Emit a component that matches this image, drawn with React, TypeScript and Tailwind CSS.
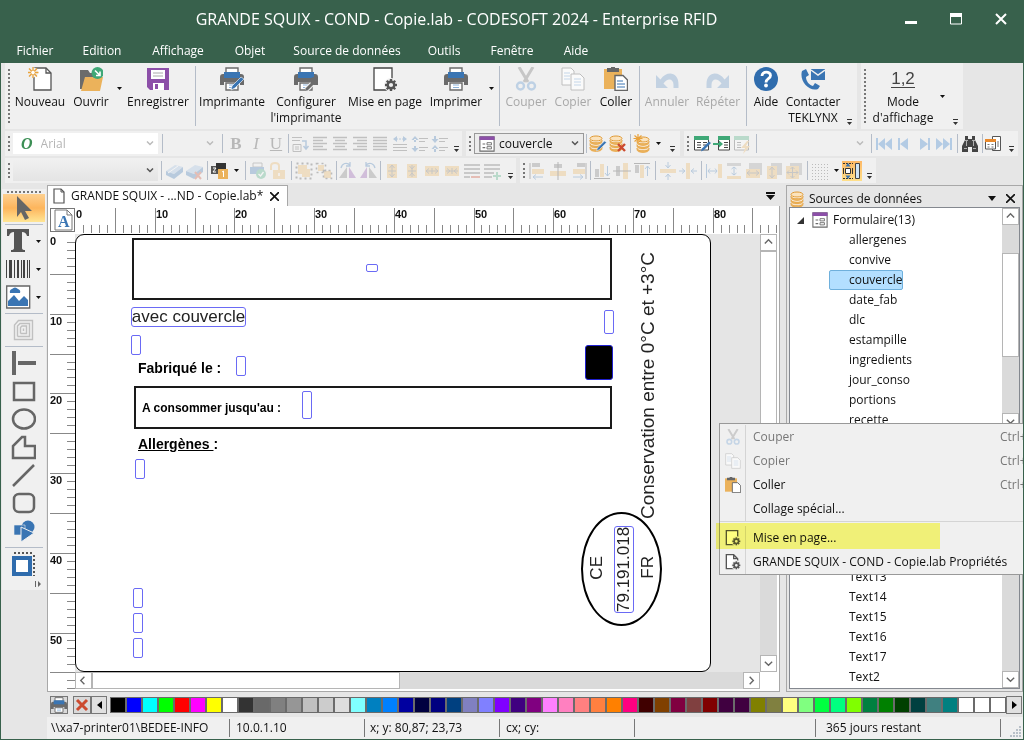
import React from 'react';
import clsx from 'clsx';

const GREY = '#6b6b6b';
const BLUE = '#3a75b3';
const ORANGE = '#ebb25b';
const PURPLE = '#8c4fa8';
const GREEN = '#3fa877';
const RED = '#cc4a2f';

type IconProps = { size?: number; box?: number; children: React.ReactNode };

const Icon: React.FC<IconProps> = ({ size = 20, box = size, children }) => (
  <svg width={size} height={size} viewBox={`0 0 ${box} ${box}`} fill="none" className="block shrink-0">
    {children}
  </svg>
);

/* ---------- shared glyph parts ---------- */

const Printer = () => (
  <>
    <path d="M6 1h12v5H6z" fill="#fff" stroke={GREY} strokeWidth="1.4" />
    <path d="M0 10q0-3 3-3h18q3 0 3 3v8h-4v-3H4v3H0z" fill={GREY} />
    <path d="M4 5h16v6H4z" fill={BLUE} />
    <path d="M6 16h12v7H6z" fill="#fff" stroke={GREY} strokeWidth="1.4" />
    <path d="M9 18h6M9 20.500h6" stroke="#8db3da" />
  </>
);

const Pencil = () => <path d="M24 12l-9 9-4 2 1-4 9-9z" fill={BLUE} stroke="#fff" strokeWidth="0.6" />;

const Gear = ({ x, y, r }: { x: number; y: number; r: number }) => (
  <g transform={`translate(${x} ${y})`}>
    {[0, 45, 90, 135].map((a) => (
      <path key={a} d={`M0 ${-r}V${r}`} stroke="#555" strokeWidth={r * 0.4} transform={`rotate(${a})`} />
    ))}
    <circle r={r * 0.55} fill="#f0f0f0" stroke="#555" strokeWidth={r * 0.4} />
  </g>
);

const Cylinder = () => (
  <>
    <path d="M2 4v11c0 2 2.500 3 6 3s6-1 6-3V4z" fill="#fff" />
    {[15, 11.5, 8].map((y) => (
      <path key={y} d={`M2 ${y - 2}v1.500c0 2 2.500 3 6 3s6-1 6-3v-1.500c0 1.500-2.500 2.500-6 2.500s-6-1-6-2.500z`} fill={ORANGE} stroke="#e09a35" strokeWidth="0.6" />
    ))}
    <ellipse cx="8" cy="4.500" rx="6" ry="2.500" fill="#fbe3bd" stroke="#e09a35" />
  </>
);

const FormGlyph = () => (
  <>
    <path d="M1 1h16v16H1z" fill="#fff" stroke={GREY} strokeWidth="1.2" />
    <path d="M.5.5h17v4H.5z" fill={PURPLE} />
    <path d="M4 9h3M4 13h3" stroke={GREY} strokeWidth="1.300" />
    <path d="M9 7.500h5v2.500H9zM9 12h5v2.500H9z" stroke={GREY} />
  </>
);

const Scissors = () => (
  <>
    <path d="M5 0l9 15M19 0l-9 15" stroke="#b5b5b5" strokeWidth="3" />
    <circle cx="6.500" cy="19" r="3.500" stroke="#a9c4e0" strokeWidth="2.400" />
    <circle cx="17.500" cy="19" r="3.500" stroke="#a9c4e0" strokeWidth="2.400" />
  </>
);

const Pages = () => (
  <>
    <path d="M1 1h9l3 3v14H1z" fill="#fff" stroke="#aaa" />
    <path d="M3 6h6M3 9h6M3 12h6" stroke="#b2cce6" />
    <path d="M10 7h9l4 4v12H10z" fill="#fff" stroke="#aaa" />
    <path d="M13 12h7M13 15h7M13 18h7" stroke="#b2cce6" />
  </>
);

const Paste = () => (
  <>
    <path d="M0 2h18v20H0z" fill={ORANGE} />
    <path d="M3 1h12v4H3zM7 0h4v2H7z" fill="#666" />
    <path d="M11 8.500h8l4.500 4.500v10.500H11z" fill="#fff" stroke="#666" strokeWidth="1.400" />
  </>
);

/* ---------- large toolbar icons (24 x 24) ---------- */

const big = {
  nouveau: (
    <>
      <path d="M6 1h12l5 5v17H6z" fill="#fff" stroke="#555" strokeWidth="1.300" />
      <path d="M18 1v5h5" stroke="#555" strokeWidth="1.300" />
      <circle cx="5" cy="5.500" r="5" fill="#f0f0f0" />
      <g stroke="#e9a23b" strokeWidth="1.300">
        <path d="M5 0v11M-.5 5.500h11M1 1.500l8 8M9 1.500l-8 8" />
      </g>
      <circle cx="5" cy="5.500" r="1.800" fill="#fff" />
    </>
  ),
  ouvrir: (
    <>
      <path d="M1 3h8l2 3h9v4H7L4 22H1z" fill={GREY} />
      <path d="M6 10h18l-3 14H2z" fill={ORANGE} />
      <circle cx="18.500" cy="6" r="6" fill={GREEN} />
      <path d="M16 3.500l5 5M21 4.500v4h-4" stroke="#fff" strokeWidth="1.600" />
    </>
  ),
  enregistrer: (
    <>
      <path d="M1 1h22v22H4l-3-3z" fill={PURPLE} />
      <path d="M5 3h14v9H5z" fill="#fff" />
      <path d="M7 6h10M7 9h10" stroke="#aaa" />
      <path d="M7 16h11v7H7z" fill="#fff" />
      <path d="M9 17h3v5H9z" fill={PURPLE} />
    </>
  ),
  imprimante: (
    <>
      <Printer />
      <Pencil />
    </>
  ),
  configurer: (
    <>
      <Printer />
      <path d="M12 23l8-8" stroke="#f0f0f0" strokeWidth="5" />
      <path d="M13 22l7-7" stroke={GREY} strokeWidth="3" strokeLinecap="round" />
      <path d="M24 13a4 4 0 1 1-4-3l-1 3 2 1z" fill={GREY} />
    </>
  ),
  mise: (
    <>
      <path d="M1 1h18v22H1z" fill="#fff" stroke="#444" strokeWidth="1.300" />
      <circle cx="18" cy="18" r="7" fill="#f0f0f0" />
      <Gear x={18} y={18} r={6} />
    </>
  ),
  imprimer: <Printer />,
  couper: <Scissors />,
  copier: <Pages />,
  coller: (
    <>
      <Paste />
      <path d="M13 14h6M13 17h8M13 20h8" stroke={BLUE} />
    </>
  ),
  annuler: <path d="M1 8v13h12l-4.500-4.500c4-6 10-5 10 1.500V21h5v-3C24 5 12 3 5.500 12.500z" fill="#b0c6dd" />,
  repeter: <path d="M23 8v13H11l4.500-4.500c-4-6-10-5-10 1.500V21H.5v-3C0 5 12 3 18.500 12.500z" fill="#b0c6dd" />,
  aide: (
    <>
      <circle cx="12" cy="12" r="12" fill="#2f6cad" />
      <path d="M8 9c0-5 8.500-5 8.500-.5 0 3.500-4.500 3-4.500 7" stroke="#fff" strokeWidth="2.800" />
      <circle cx="12" cy="18.500" r="1.900" fill="#fff" />
    </>
  ),
  contacter: (
    <>
      <path d="M1 4l4-2 3 6-3 2c0 4 3 8 7 9l2-3 5 3-2 3C8 25-2 14 1 4z" fill={BLUE} />
      <path d="M10 2h14v11H10z" fill={BLUE} />
      <path d="M10 3l7 5 7-5" stroke="#f0f0f0" strokeWidth="1.500" />
    </>
  ),
};

/* ---------- small toolbar icons (20 x 20) ---------- */

const lines = (spans: [number, number][]) => (
  <path d={spans.map(([a, b], i) => `M${a} ${3.5 + i * 3}H${b}`).join('')} stroke="#555" strokeWidth="1.300" />
);

const small = {
  props: (
    <>
      <path d="M2 3.500h10M2 6.500h8M3 10.500h8v7H3zM5 13h4M5 15h4" stroke="#555" />
      <path d="M12 7h4v7M13.500 12l2.500 3 2.500-3" stroke={BLUE} strokeWidth="1.500" />
    </>
  ),
  left: lines([[3, 17], [3, 13], [3, 17], [3, 13], [3, 17]]),
  center: lines([[3, 17], [5, 15], [3, 17], [5, 15], [3, 17]]),
  right: lines([[3, 17], [7, 17], [3, 17], [7, 17], [3, 17]]),
  justify: lines([[3, 17], [3, 17], [3, 17], [3, 17], [3, 17]]),
  widen: (
    <>
      <path d="M3 10.500h14M3 13.500h14M3 16.500h14" stroke="#555" />
      <path d="M6 5H14" stroke={BLUE} strokeDasharray="2 1" />
      <path d="M7 2v6L3 5zM13 2v6l4-3z" fill={BLUE} />
    </>
  ),
  spaceDown: (
    <>
      <path d="M9 4.500h9M9 7.500h6M9 13.500h9M9 16.500h6" stroke="#555" />
      <path d="M5 2L1.500 6h7zM5 18l-3.500-4h7zM4 5h2v3H4zM4 12h2v3H4z" fill={BLUE} />
    </>
  ),
  spaceUp: (
    <>
      <path d="M9 4.500h9M9 7.500h6M9 13.500h9M9 16.500h6" stroke="#555" />
      <path d="M5 9L1.500 5h7zM5 11l-3.500 4h7zM4 2h2v3H4zM4 14h2v4H4z" fill={BLUE} />
    </>
  ),
  dbEdit: (
    <>
      <Cylinder />
      <path d="M18.500 8.500l-7 7-3 1.500 1-3 7-7z" fill={BLUE} stroke="#f0f0f0" strokeWidth="0.500" />
    </>
  ),
  dbDelete: (
    <>
      <Cylinder />
      <path d="M10 10l7 7M17 10l-7 7" stroke={RED} strokeWidth="2.400" />
    </>
  ),
  dbNew: (
    <>
      <g transform="translate(3 1)">
        <Cylinder />
      </g>
      <path d="M6 0v9M1.500 4.500h9M2.500 1.500l7 6M9.500 1.500l-7 6" stroke="#e9a23b" strokeWidth="1.200" />
    </>
  ),
  tableEdit: (
    <>
      <path d="M2.500 3h14v13h-14z" fill="#fff" stroke="#444" />
      <path d="M2 2h15v4H2z" fill={GREEN} />
      <path d="M5 8.500h4M5 11h4M5 13.500h4M11 8.500h4M11 11h3" stroke="#444" />
      <path d="M19 9l-7 7-3 1.500 1-3 7-7z" fill={BLUE} />
    </>
  ),
  tableImport: (
    <>
      <path d="M6.500 3h11v13h-11z" fill="#fff" stroke="#444" />
      <path d="M6 2h12v4H6zM1 9h6V6.500L11 10l-4 3.500V11H1z" fill={GREEN} />
      <path d="M12 8.500h4M12 11h4M12 13.500h4" stroke="#444" />
    </>
  ),
  tableFlash: (
    <>
      <path d="M2.500 3h14v13h-14z" fill="#fff" stroke="#444" />
      <path d="M2 2h15v4H2z" fill={GREEN} />
      <path d="M5 8.500h4M5 11h4M5 13.500h4" stroke="#444" />
      <path d="M15 7l-6 7h4l-2 6 7-8h-4l3-5z" fill={ORANGE} />
    </>
  ),
  first: <path d="M2 4h2v12H2zM11 4v12l-7-6zM18 4v12l-7-6z" fill="#a5c3e2" />,
  prev: <path d="M4 4h2v12H4zM14 4v12l-8-6z" fill="#a5c3e2" />,
  next: <path d="M14 4h2v12h-2zM6 4v12l8-6z" fill="#a5c3e2" />,
  last: <path d="M16 4h2v12h-2zM2 4v12l7-6zM9 4v12l7-6z" fill="#a5c3e2" />,
  find: (
    <>
      <path d="M5 2h3v3h4V2h3v4l3 6v6h-6v-5H8v5H2v-6l3-6z" fill="#444" />
      <path d="M5 6.500h3M12 6.500h3M4 14.500h3M13 14.500h3M6.500 7v5M13.500 7v5" stroke="#b0b0b0" />
    </>
  ),
  record: (
    <>
      <path d="M8.500 2.500h8v14h-8z" fill="#fff" stroke="#555" />
      <path d="M1.500 6h10v9h-10z" fill="#fff" stroke="#555" />
      <path d="M1 5h11v3H1z" fill="#e8892c" />
      <path d="M3.500 10.500h2M3.500 13h2M7.500 10.500h2M7.500 13h2M14 7v6" stroke="#777" />
    </>
  ),
  box: (
    <>
      <path d="M2 10l9-6 8 2-9 7z" fill="#9dbde0" />
      <path d="M2 10l8 3v5l-8-4zM10 13l9-7v5l-9 7z" fill={BLUE} />
      <path d="M4 12l10-7" stroke="#fff" />
    </>
  ),
  boxDelete: (
    <>
      <path d="M2 10l9-6 8 2-9 7z" fill="#9dbde0" />
      <path d="M2 10l8 3v5l-8-4zM10 13l9-7v5l-9 7z" fill={BLUE} />
      <path d="M11 11l6 7M17 11l-6 7" stroke={RED} strokeWidth="2" />
    </>
  ),
  layers: (
    <>
      <path d="M1 5h9v8H1z" fill="#555" />
      <path d="M6 2h10v7H6z" fill="#333" />
      <path d="M8 8h10v10H8z" fill={ORANGE} />
      <path d="M3 7h3l-3 4h3" stroke="#fff" />
      <path d="M12 11l1.500-1v6" stroke="#fff" />
    </>
  ),
  printCheck: (
    <>
      <path d="M5 2h9v4H5z" stroke={GREY} />
      <path d="M2 6h14v7H2z" fill={BLUE} />
      <circle cx="13" cy="13" r="5" fill={GREEN} />
      <path d="M10.500 13l2 2 3-4" stroke="#fff" strokeWidth="1.300" />
    </>
  ),
  unlock: (
    <>
      <path d="M3 9V5c0-4 8-4 8 0v4" stroke={ORANGE} strokeWidth="2" />
      <path d="M5 9h12v9H5z" fill={ORANGE} />
      <path d="M11 12v3" stroke="#fff" strokeWidth="1.500" />
    </>
  ),
  group: (
    <>
      <path d="M4 4h9v9H4zM8 8h8v8H8z" fill={ORANGE} />
      <path d="M2.500 2.500h15v15h-15z" stroke="#444" strokeWidth="2" strokeDasharray="2 3" />
    </>
  ),
  ungroup: (
    <>
      <path d="M4 4h6v6H4zM10 10h7v7h-7z" fill={ORANGE} />
      <path d="M2.500 2.500h9v9h-9zM9.500 9.500h8v8h-8z" stroke="#444" strokeWidth="1.600" strokeDasharray="2 3" />
    </>
  ),
  rotateLeft: (
    <>
      <path d="M9 6v11H1z" fill="#777" />
      <path d="M11 6v11h7z" fill={PURPLE} />
      <path d="M3 7c1-5 6-6 9-3M12 1v4H8" stroke={BLUE} strokeWidth="1.300" />
    </>
  ),
  rotateRight: (
    <>
      <path d="M9 6v11H2z" fill={PURPLE} />
      <path d="M11 6v11h8z" fill="#777" />
      <path d="M17 7c-1-5-6-6-9-3M8 1v4h4" stroke={BLUE} strokeWidth="1.300" />
    </>
  ),
  growV: (
    <>
      <path d="M5 3h10v14H5z" fill={ORANGE} />
      <path d="M10 4v12M7.500 7L10 4l2.500 3M7.500 13l2.500 3 2.500-3M6 10h8" stroke={GREY} />
    </>
  ),
  shrinkV: (
    <>
      <path d="M5 3h10v14H5z" fill={ORANGE} />
      <path d="M10 4v12M7.500 5l2.500 3 2.500-3M7.500 15l2.500-3 2.500 3M6 10h8" stroke={GREY} />
    </>
  ),
  growH: (
    <>
      <path d="M3 5h14v10H3z" fill={ORANGE} />
      <path d="M4 10h12M7 7.500L4 10l3 2.500M13 7.500l3 2.500-3 2.500M10 7v6" stroke={GREY} />
    </>
  ),
  shrinkH: (
    <>
      <path d="M3 5h14v10H3z" fill={ORANGE} />
      <path d="M4 10h12M5 7.500L8 10l-3 2.500M15 7.500L12 10l3 2.500M10 7v6" stroke={GREY} />
    </>
  ),
  rowRemove: (
    <>
      <path d="M2 4h16M2 8h16M2 12h16M2 16h6" stroke="#444" strokeWidth="1.500" />
      <path d="M9 16h9" stroke={RED} strokeWidth="2" />
    </>
  ),
  rowAdd: (
    <>
      <path d="M2 4h16M2 8h16M2 12h10M2 16h8" stroke="#444" strokeWidth="1.500" />
      <path d="M11 15h8M15 11v8" stroke={GREEN} strokeWidth="2" />
    </>
  ),
  alignL: (
    <>
      <path d="M2 2v16" stroke="#333" />
      <path d="M4 2h8v4H4z" fill="#777" />
      <path d="M4 8h12v5H4z" fill={ORANGE} />
      <path d="M15 16H5M8 13.500L5 16l3 2.500" stroke={BLUE} />
    </>
  ),
  alignC: (
    <>
      <path d="M6 3h8v4H6z" fill="#777" />
      <path d="M2 10h16v5H2z" fill={ORANGE} />
      <path d="M10 1v18" stroke="#333" />
    </>
  ),
  alignR: (
    <>
      <path d="M18 2v16" stroke="#333" />
      <path d="M9 2h8v4H9z" fill="#777" />
      <path d="M5 8h12v5H5z" fill={ORANGE} />
      <path d="M5 16h10M12 13.500l3 2.500-3 2.500" stroke={BLUE} />
    </>
  ),
  alignB: (
    <>
      <path d="M2 17.500h16" stroke="#333" />
      <path d="M3 8h4v8H3z" fill="#777" />
      <path d="M8 3h4v13H8z" fill={ORANGE} />
      <path d="M15.500 5v10M13 12l2.500 3 2.500-3" stroke={BLUE} />
    </>
  ),
  alignM: (
    <>
      <path d="M4 5h4v10H4z" fill="#777" />
      <path d="M11 2h5v16h-5z" fill={ORANGE} />
      <path d="M1 10h18" stroke="#333" />
    </>
  ),
  alignT: (
    <>
      <path d="M2 2.500h16" stroke="#333" />
      <path d="M3 4h4v8H3z" fill="#777" />
      <path d="M8 4h4v13H8z" fill={ORANGE} />
      <path d="M15.500 15V5M13 8l2.500-3L18 8" stroke={BLUE} />
    </>
  ),
  meetV: (
    <>
      <path d="M2 8h16v4H2z" fill={ORANGE} />
      <path d="M10 1v5M7.500 4L10 7l2.500-3M10 19v-5M7.500 16l2.500-3 2.500 3" stroke={BLUE} />
    </>
  ),
  meetH: (
    <>
      <path d="M8 2h4v16H8z" fill={ORANGE} />
      <path d="M1 10h5M4 7.500L7 10l-3 2.500M19 10h-5M16 7.500L13 10l3 2.500" stroke={BLUE} />
    </>
  ),
  spreadH: (
    <>
      <path d="M14 3h4v14h-4z" fill={ORANGE} />
      <path d="M2.500 3v14M4 10h9M6 7.500L4 10l2 2.500M11 7.500l2 2.500-2 2.500" stroke={BLUE} />
    </>
  ),
  spreadV: (
    <>
      <path d="M3 2h14v3H3z" fill="#999" />
      <path d="M3 15h14v3H3z" fill={ORANGE} />
      <path d="M10 6v8M7.500 8L10 6l2.500 2M7.500 12l2.500 2 2.500-2" stroke={BLUE} />
    </>
  ),
  sameW: (
    <>
      <path d="M5 2h13v12H5z" fill="#999" />
      <path d="M2 8h14v9H2z" fill={ORANGE} />
      <path d="M3 12h12M6 9.500L3 12l3 2.500M12 9.500l3 2.500-3 2.500" stroke={GREY} />
    </>
  ),
  sameH: (
    <>
      <path d="M7 2h11v12H7z" fill="#999" />
      <path d="M3 5h10v13H3z" fill={ORANGE} />
      <path d="M8 6v11M5.500 9L8 6l2.500 3M5.500 14L8 17l2.500-3" stroke={GREY} />
    </>
  ),
  sameWH: (
    <>
      <path d="M6 2h12v12H6z" fill="#999" />
      <path d="M2 5h13v13H2z" fill={ORANGE} />
      <path d="M8.500 6v11M3 11.500h11M6.500 8l2-2 2 2M6.500 15l2 2 2-2M5 9.500l-2 2 2 2M12 9.500l2 2-2 2" stroke={GREY} />
    </>
  ),
  grid: <path d="M2 3.500h17M2 6.500h17M2 9.500h17M2 12.500h17M2 15.500h17M2 18.500h17" stroke="#444" strokeDasharray="1 2" />,
  snap: (
    <>
      <path d="M1 2.500h10M1 17.500h10" stroke="#333" strokeDasharray="2 1" />
      <path d="M3.500 7.500h5v5h-5z" fill="#fff" stroke="#333" />
      <path d="M6 2L3.500 5.500h5zM6 18l-2.500-3.500h5z" fill={BLUE} />
      <path d="M1.500 7v6M10.500 7v6" stroke="#333" />
      <path d="M13.500 2.500h4v15h-4z" fill="#cfe5f7" stroke="#444" />
    </>
  ),
};

/* ---------- toolbar building blocks ---------- */

const Bar: React.FC<{ className?: string; children: React.ReactNode }> = ({ className, children }) => (
  <div className={clsx('flex items-center bg-[#f0f0f0]', className)}>{children}</div>
);

const Handle: React.FC<{ tall?: boolean }> = ({ tall }) => (
  <div className="flex w-2 shrink-0 justify-center">
    <div className={clsx('border-l-2 border-dotted border-[#777]', tall ? 'h-[54px]' : 'h-[15px]')} />
  </div>
);

const Sep: React.FC<{ className?: string }> = ({ className = 'w-1' }) => (
  <div className={clsx('flex shrink-0 justify-center self-stretch py-[3px]', className)}>
    <div className="w-px bg-[#b4bcc8]" />
  </div>
);

const Caret: React.FC<{ label: string; className?: string }> = ({ label, className = 'w-3' }) => (
  <button aria-label={label} className={clsx('flex shrink-0 justify-center', className)}>
    <svg width="5" height="3" viewBox="0 0 5 3">
      <path d="M0 0h5L2.500 3z" fill="#111" />
    </svg>
  </button>
);

const More: React.FC<{ className?: string }> = ({ className }) => (
  <button aria-label="Options de barre d'outils" className={clsx('flex shrink-0 items-end justify-center self-stretch pb-1', className)}>
    <svg width="5" height="6" viewBox="0 0 5 6">
      <path d="M0 0h5v1H0zM0 3h5L2.500 6z" fill="#333" />
    </svg>
  </button>
);

const BigTool: React.FC<{ icon: React.ReactNode; label: string; second?: string; width: string; off?: boolean }> = ({ icon, label, second, width, off }) => (
  <button disabled={off} className={clsx('flex shrink-0 flex-col items-center self-stretch pt-1 whitespace-nowrap', width, off && 'text-[#a8a8a8]')}>
    <span className={clsx(off && 'opacity-70')}>
      <Icon size={24}>{icon}</Icon>
    </span>
    <span className="mt-[3px] leading-4">{label}</span>
    {second && <span className="leading-4">{second}</span>}
  </button>
);

const Tool: React.FC<{ name: keyof typeof small; off?: boolean; active?: boolean }> = ({ name, off = true, active }) => (
  <button
    aria-label={name}
    disabled={off}
    className={clsx('shrink-0', off && 'opacity-30', active && 'bg-linear-to-b from-[#fdb866] to-[#ffe08a]')}
  >
    <Icon size={20}>{small[name]}</Icon>
  </button>
);

const Combo: React.FC<{ label: string; value: string; className?: string; dim?: boolean; icon?: React.ReactNode; field?: string }> = ({ label, value, className, dim, icon, field }) => (
  <label className={clsx('flex h-[21px] shrink-0 items-center pr-1 pl-1', className)}>
    {icon}
    <select aria-label={label} disabled={dim} className={clsx('min-w-0 flex-1 appearance-none bg-transparent outline-none', field)}>
      <option>{value}</option>
    </select>
    <svg width="8" height="5" viewBox="0 0 8 5" fill="none">
      <path d="M1 .5l3 3 3-3" stroke={dim ? '#bbb' : '#555'} strokeWidth="1.500" />
    </svg>
  </label>
);

const menus = [
  ['Fichier', 'w-[68px]'],
  ['Edition', 'w-[66px]'],
  ['Affichage', 'w-[86px]'],
  ['Objet', 'w-[58px]'],
  ['Source de données', 'w-[136px]'],
  ['Outils', 'w-[58px]'],
  ['Fenêtre', 'w-[78px]'],
  ['Aide', 'w-[50px]'],
];

const TitleBar = () => (
  <header className="bg-[#38614c] text-white">
    <div className="flex h-[38px] items-center">
      <h1 className="flex-1 pl-6 text-center text-[16px]">GRANDE SQUIX - COND - Copie.lab - CODESOFT 2024 - Enterprise RFID</h1>
      <button aria-label="Réduire" className="flex w-[45px] justify-center">
        <Icon size={12}><path d="M0 8h12v3H0z" fill="#fff" /></Icon>
      </button>
      <button aria-label="Agrandir" className="flex w-[45px] justify-center">
        <Icon size={12}><path d="M.5 1h11v10H.5z" stroke="#fff" /><path d="M0 0h12v4H0z" fill="#fff" /></Icon>
      </button>
      <button aria-label="Fermer" className="flex w-[45px] justify-center">
        <Icon size={12}><path d="M1 1l10 10M11 1L1 11" stroke="#fff" strokeWidth="2" /></Icon>
      </button>
    </div>
    <nav className="flex h-[25px] items-center">
      {menus.map(([name, width]) => (
        <button key={name} className={clsx('shrink-0 text-center whitespace-nowrap', width)}>{name}</button>
      ))}
    </nav>
  </header>
);

const Toolbars = () => (
  <div className="flex flex-col gap-[2px] overflow-hidden pl-1">
    <div className="flex h-[66px] gap-1">
      <Bar>
        <Handle tall />
        <BigTool icon={big.nouveau} label="Nouveau" width="w-[54px]" />
        <BigTool icon={big.ouvrir} label="Ouvrir" width="w-[48px]" />
        <Caret label="Fichiers récents" className="w-2 pb-4" />
        <BigTool icon={big.enregistrer} label="Enregistrer" width="w-[70px]" />
        <Sep />
        <BigTool icon={big.imprimante} label="Imprimante" width="w-[70px]" />
        <BigTool icon={big.configurer} label="Configurer" second="l'imprimante" width="w-[78px]" />
        <BigTool icon={big.mise} label="Mise en page" width="w-[80px]" />
        <BigTool icon={big.imprimer} label="Imprimer" width="w-[62px]" />
        <Caret label="Options d'impression" className="w-2 pb-4" />
        <Sep className="w-2" />
        <BigTool icon={big.couper} label="Couper" width="w-[46px]" off />
        <BigTool icon={big.copier} label="Copier" width="w-[48px]" off />
        <BigTool icon={big.coller} label="Coller" width="w-[38px]" />
        <Sep className="w-2" />
        <BigTool icon={big.annuler} label="Annuler" width="w-[48px]" off />
        <BigTool icon={big.repeter} label="Répéter" width="w-[54px]" off />
        <Sep className="w-[3px]" />
        <BigTool icon={big.aide} label="Aide" width="w-[36px]" />
        <BigTool icon={big.contacter} label="Contacter" second="TEKLYNX" width="w-[58px]" />
        <More className="w-[15px]" />
      </Bar>
      <Bar>
        <Handle tall />
        <button className="flex w-[68px] flex-col items-center self-stretch pt-1">
          <span className="flex h-6 items-center">
            <span className="border-b border-[#444] font-['Liberation_Sans',sans-serif] text-[17px] leading-4 text-[#444]">1,2</span>
          </span>
          <span className="mt-[3px] leading-4">Mode</span>
          <span className="leading-4">d'affichage</span>
        </button>
        <Caret label="Modes d'affichage" className="w-[10px]" />
        <More className="w-4" />
      </Bar>
    </div>

    <div className="flex h-[25px] gap-1">
      <Bar className="w-[457px]">
        <Handle />
        <Combo
          label="Police"
          value="Arial"
          dim
          className="w-[145px] bg-white"
          field="pl-1 text-[#b5b5b5]"
          icon={<span className="px-1 font-['Liberation_Serif',serif] text-[16px] leading-4 font-bold text-[#3c8f55] italic">O</span>}
        />
        <Sep className="w-2" />
        <Combo label="Taille de police" value="" dim className="w-[52px]" />
        <Sep className="w-2" />
        <button aria-label="Gras" disabled className="w-5 font-['Liberation_Serif',serif] text-[17px] leading-5 font-bold text-[#b8b8b8]">B</button>
        <button aria-label="Italique" disabled className="w-5 font-['Liberation_Serif',serif] text-[17px] leading-5 text-[#b8b8b8] italic">I</button>
        <button aria-label="Souligné" disabled className="w-5 font-['Liberation_Serif',serif] text-[17px] leading-5 text-[#b8b8b8] underline">U</button>
        <Sep />
        <Tool name="props" />
        <Tool name="left" />
        <Tool name="center" />
        <Tool name="right" />
        <Tool name="justify" />
        <Tool name="widen" />
        <Tool name="spaceDown" />
        <Tool name="spaceUp" />
        <More className="ml-auto w-3" />
      </Bar>
      <Bar>
        <Handle />
        <Combo label="Variable" value="couvercle" className="w-[110px] border border-[#999] bg-[#ececec]" field="pl-1" icon={<Icon size={16} box={18}><FormGlyph /></Icon>} />
        <Sep />
        <Tool name="dbEdit" off={false} />
        <Tool name="dbDelete" off={false} />
        <Sep />
        <Tool name="dbNew" off={false} />
        <Caret label="Nouvelle source" />
        <More className="w-4" />
      </Bar>
      <Bar>
        <Handle />
        <Tool name="tableEdit" off={false} />
        <Tool name="tableImport" off={false} />
        <Tool name="tableFlash" />
        <Sep className="w-2" />
        <Combo label="Enregistrement" value="" dim className="w-[108px]" />
        <Sep className="w-[6px]" />
        <button aria-label="Premier" disabled className="opacity-80"><Icon size={20}>{small.first}</Icon></button>
        <button aria-label="Précédent" disabled className="opacity-80"><Icon size={20}>{small.prev}</Icon></button>
        <button aria-label="Suivant" disabled className="opacity-80"><Icon size={20}>{small.next}</Icon></button>
        <button aria-label="Dernier" disabled className="opacity-80"><Icon size={20}>{small.last}</Icon></button>
        <Sep className="w-[6px]" />
        <Tool name="find" off={false} />
        <Sep />
        <Tool name="record" off={false} />
        <More className="w-[14px]" />
      </Bar>
    </div>

    <div className="flex h-[25px] gap-1">
      <Bar className="w-[511px]">
        <Handle />
        <Combo label="Objet" value="" className="w-[145px] bg-linear-to-b from-[#f0f0f0] to-[#e4e4e4]" />
        <Sep className="w-[6px]" />
        <Tool name="box" />
        <Tool name="boxDelete" />
        <Sep className="w-[6px]" />
        <Tool name="layers" off={false} />
        <Caret label="Ordre" />
        <Sep className="w-[6px]" />
        <Tool name="printCheck" />
        <Tool name="unlock" />
        <Sep className="w-[6px]" />
        <Tool name="group" />
        <Tool name="ungroup" />
        <Sep />
        <Tool name="rotateLeft" />
        <Tool name="rotateRight" />
        <Sep />
        <Tool name="growV" />
        <Tool name="shrinkV" />
        <Tool name="growH" />
        <Tool name="shrinkH" />
        <Tool name="rowRemove" />
        <Tool name="rowAdd" />
        <More className="ml-auto w-3" />
      </Bar>
      <Bar>
        <Handle />
        <Tool name="alignL" />
        <Tool name="alignC" />
        <Tool name="alignR" />
        <Sep />
        <Tool name="alignB" />
        <Tool name="alignM" />
        <Tool name="alignT" />
        <Sep className="w-[6px]" />
        <Tool name="meetV" />
        <Tool name="meetH" />
        <Sep className="w-[6px]" />
        <Tool name="spreadH" />
        <Tool name="spreadV" />
        <Tool name="sameW" />
        <Tool name="sameH" />
        <Tool name="sameWH" />
        <Sep className="w-[6px]" />
        <Tool name="grid" />
        <Caret label="Grille" />
        <Tool name="snap" off={false} active />
        <More className="w-[14px]" />
      </Bar>
    </div>
  </div>
);

/* ---------- left creation toolbox ---------- */

const side: { name: string; art: React.ReactNode; caret?: boolean; line?: boolean; active?: boolean }[] = [
  { name: 'Sélection', active: true, line: true, art: <path d="M11 2l15 15h-7l4 7-4 2-4-8-4 5z" fill="#666" /> },
  { name: 'Texte', caret: true, art: <path d="M1 2h22v7h-2q-1-4-5-4v16q0 2 3 2v2H5v-2q3 0 3-2V5Q4 5 3 9H1z" fill="#555" /> },
  {
    name: 'Code-barres',
    caret: true,
    art: <path d="M0 5h1v18H0zM3 5h3v18H3zM8 5h1v18H8zM11 5h2v18h-2zM15 5h1v18h-1zM17 5h2v18h-2zM21 5h1v18h-1zM23 5h1v18h-1z" fill="#444" />,
  },
  {
    name: 'Image',
    caret: true,
    line: true,
    art: (
      <>
        <path d="M.7 3h23v22H.7z" fill="#fff" stroke="#666" strokeWidth="1.300" />
        <path d="M2 23v-5l6-6 5 6 5-5 4 4v6z" fill={BLUE} />
        <path d="M4 10a3 3 0 0 1 2-4q3-3 6 0 3 1 2 4z" fill={BLUE} />
      </>
    ),
  },
  {
    name: 'RFID',
    line: true,
    art: (
      <path
        d="M8.500 23.500V9l4-4.500h14v19zM11.500 20.500V10l2.500-2.500h9.500v13h-12M14.500 17.500V11.500l1.500-1.500h4.500v7.500h-6M17.500 12.500v2.500"
        stroke="#c0c0c0"
        strokeWidth="1.400"
      />
    ),
  },
  { name: 'Trait', art: <path d="M6 2h4v24H6zM12 12h18v4H12z" fill="#666" /> },
  { name: 'Rectangle', art: <path d="M8 6h20v17H8z" stroke="#666" strokeWidth="2.500" /> },
  { name: 'Ellipse', art: <ellipse cx="18" cy="14" rx="11" ry="9.500" stroke="#666" strokeWidth="2.500" /> },
  { name: 'Polygone', art: <path d="M7 25V13l9-9h3v9h10v12z" stroke="#666" strokeWidth="2.500" /> },
  { name: 'Oblique', art: <path d="M7 25L28 4" stroke="#666" strokeWidth="2.500" /> },
  { name: 'Rectangle arrondi', art: <rect x="8" y="5" width="20" height="18" rx="5" stroke="#666" strokeWidth="2.500" /> },
  {
    name: 'Formes',
    line: true,
    art: (
      <>
        <circle cx="22" cy="10" r="6.500" fill={BLUE} />
        <path d="M8 8h11v10H8z" fill={BLUE} stroke="#f0f0f0" strokeWidth="0.600" />
        <path d="M15 10l13 6-13 9z" fill={BLUE} stroke="#f0f0f0" />
      </>
    ),
  },
  {
    name: 'Bordure',
    art: (
      <>
        <path d="M8 8h16v16H8z" fill="#fff" stroke="#2f6cad" strokeWidth="4" />
        <path d="M8 3h20M28 5v21" stroke="#555" strokeWidth="2" strokeDasharray="2 2" />
      </>
    ),
  },
];

const SideBar = () => (
  <aside className="mt-1 flex w-11 shrink-0 flex-col self-start bg-[#f0f0f0] px-px pt-[2px]">
    <div className="mx-1 mb-px border-t-2 border-dotted border-[#777]" />
    {side.map((s) => (
      <React.Fragment key={s.name}>
        <button aria-label={s.name} className={clsx('flex h-7 items-center pl-[3px]', s.active && 'bg-linear-to-b from-[#fdd08f] via-[#fdb55c] to-[#ffe694]')}>
          <svg width="30" height="28" viewBox="0 0 30 28" fill="none">{s.art}</svg>
          {s.caret && (
            <svg width="5" height="3" viewBox="0 0 5 3"><path d="M0 0h5L2.500 3z" fill="#111" /></svg>
          )}
        </button>
        {s.line && <div className="mx-0.5 my-[2px] h-px bg-[#b4bcc8]" />}
      </React.Fragment>
    ))}
    <div className="flex h-3 items-center justify-end pr-1">
      <svg width="6" height="6" viewBox="0 0 6 6"><path d="M0 0h1v6H0zM3 0l3 3-3 3z" fill="#666" /></svg>
    </div>
  </aside>
);

/* ---------- scroll bars ---------- */

const chevrons = { up: 'M2 7l4-4 4 4', down: 'M2 4l4 4 4-4', left: 'M7 2L3 6l4 4', right: 'M4 2l4 4-4 4' };

const ScrollButton: React.FC<{ dir: keyof typeof chevrons }> = ({ dir }) => (
  <button aria-label={dir} className="flex size-[17px] shrink-0 items-center justify-center border border-[#b5b5b5] bg-white">
    <Icon size={11} box={12}><path d={chevrons[dir]} stroke="#666" strokeWidth="1.500" /></Icon>
  </button>
);

/* ---------- label view ---------- */

const MM = 7.97;
const ticks = Array.from({ length: 88 }, (_, i) => i + 1);

const TopRuler = () => (
  <svg className="h-7 min-w-0 flex-1 overflow-hidden" fill="#111" fontFamily="'Liberation Sans', sans-serif" fontSize="11" fontWeight="bold">
    {ticks.map((t) => (
      <path key={t} d={`M${Math.round(t * MM)}.5 ${t % 5 ? 19 : 2}V27`} stroke="#888" />
    ))}
    {[0, 10, 20, 30, 40, 50, 60, 70, 80].map((n) => (
      <text key={n} x={Math.round(n * MM) + 1} y="12">{n}</text>
    ))}
  </svg>
);

const LeftRuler = () => (
  <svg className="w-[27px] shrink-0 self-stretch overflow-hidden" height="100%" fill="#111" fontFamily="'Liberation Sans', sans-serif" fontSize="11" fontWeight="bold">
    {ticks.slice(0, 57).map((t) => (
      <path key={t} d={`M${t % 5 ? 19 : 2} ${Math.round(t * MM)}.5H27`} stroke="#888" />
    ))}
    {[0, 10, 20, 30, 40, 50].map((n) => (
      <text key={n} x="2" y={Math.round(n * MM) + 11}>{n}</text>
    ))}
  </svg>
);

const fields = [
  'left-[290px] top-[29px] w-[12px] h-[8px]',
  'left-[528px] top-[75px] w-[10px] h-[24px]',
  'left-[55px] top-[100px] w-[10px] h-[20px]',
  'left-[160px] top-[121px] w-[10px] h-[20px]',
  'left-[226px] top-[156px] w-[10px] h-[28px]',
  'left-[59px] top-[224px] w-[10px] h-[20px]',
  'left-[57px] top-[353px] w-[10px] h-[20px]',
  'left-[57px] top-[378px] w-[10px] h-[20px]',
  'left-[57px] top-[403px] w-[10px] h-[20px]',
];

const upright = 'absolute rotate-180 whitespace-nowrap [writing-mode:vertical-rl]';
const caption = 'absolute leading-5 font-bold whitespace-nowrap';

const Label = () => (
  <div className="relative h-[438px] w-[636px] rounded-[9px] border border-black bg-white font-['Liberation_Sans',sans-serif] text-black">
    <div className="absolute top-[3px] left-[56px] h-[62px] w-[480px] border-2 border-[#1a1a1a]" />
    <div className="absolute top-[151px] left-[58px] h-[43px] w-[478px] border-2 border-[#1a1a1a]" />
    <div className="absolute top-[110px] left-[509px] h-[35px] w-[28px] rounded-[3px] border border-[#2020d0] bg-black" />
    {fields.map((place) => (
      <div key={place} className={clsx('absolute rounded-[2px] border border-[#6a6af5]', place)} />
    ))}
    <div className="absolute top-[72px] left-[55px] flex h-[20px] w-[115px] items-center justify-center rounded-[3px] border border-[#6a6af5] text-[17px] leading-4 whitespace-nowrap text-[#222]">
      avec couvercle
    </div>
    <div className={clsx(caption, 'top-[123px] left-[62px] text-[14px]')}>Fabriqué le :</div>
    <div className={clsx(caption, 'top-[163px] left-[66px] text-[12px]')}>A consommer jusqu'au :</div>
    <div className={clsx(caption, 'top-[199px] left-[62px] text-[14px]')}>
      <span className="underline">Allergènes </span>:
    </div>
    <div className={clsx(upright, 'top-[17px] left-[562px] text-[19px] leading-5 text-[#222]')}>Conservation entre 0°C et +3°C</div>
    <div className="absolute top-[277px] left-[505px] h-[114px] w-[81px] rounded-[50%] border-[2px] border-black" />
    <div className={clsx(upright, 'top-[321px] left-[511px] text-[17px] leading-5 text-[#222]')}>CE</div>
    <div className={clsx(upright, 'top-[291px] left-[538px] h-[87px] w-[20px] rounded-[3px] border border-[#6a6af5] text-[17px] leading-[18px] text-[#222]')}>79.191.018</div>
    <div className={clsx(upright, 'top-[321px] left-[562px] text-[17px] leading-5 text-[#222]')}>FR</div>
  </div>
);

const DocumentView = () => (
  <section className="flex min-w-0 flex-1 flex-col">
    <div className="flex h-[21px] items-end">
      <div className="flex h-[21px] items-center border border-b-0 border-[#a8a8a8] bg-white pr-2 pl-1 whitespace-nowrap">
        <Icon size={16}>
          <path d="M2 1h7l3 3v11H2z" fill="#fff" stroke="#555" strokeWidth="1.200" />
          <path d="M9 1v3h3" stroke="#555" />
        </Icon>
        <span className="w-[194px] pl-[3px]">GRANDE SQUIX - ...ND - Copie.lab*</span>
        <button aria-label="Fermer l'onglet" className="ml-2">
          <Icon size={9}><path d="M0 0l9 9M9 0L0 9" stroke="#111" strokeWidth="1.600" /></Icon>
        </button>
      </div>
      <button aria-label="Liste des onglets" className="ml-auto self-center pr-[5px]">
        <svg width="9" height="8" viewBox="0 0 9 8"><path d="M0 0h9v2H0zM0 3h9L4.500 8z" fill="#111" /></svg>
      </button>
    </div>
    <div className="flex min-h-0 flex-1 flex-col border border-t-0 border-[#a8a8a8] bg-white pr-[2px] pb-[2px]">
      <div className="flex h-[28px]">
        <button aria-label="Propriétés du document" className="m-[2px] mr-0 flex w-[25px] items-center justify-center border border-[#777]">
          <Icon size={22}>
            <path d="M3 1h12l5 5v15H3z" fill="#fff" stroke="#777" />
            <path d="M15 1v5h5" stroke="#777" />
            <text x="6" y="18" fontFamily="'Liberation Serif', serif" fontSize="16" fontWeight="bold" fill={BLUE}>A</text>
          </Icon>
        </button>
        <TopRuler />
      </div>
      <div className="flex min-h-0 flex-1">
        <LeftRuler />
        <div className="flex min-w-0 flex-1 flex-col">
          <div className="flex min-h-0 flex-1">
            <div className="min-w-0 flex-1 overflow-hidden bg-[#e5e5e5]">
              <Label />
            </div>
            <div className="flex w-[17px] flex-col bg-[#dadada]">
              <ScrollButton dir="up" />
              <div className="h-1/2 border border-[#b5b5b5] bg-white" />
              <div className="flex-1" />
              <ScrollButton dir="down" />
            </div>
          </div>
          <div className="mr-[17px] flex h-[17px] bg-[#dadada]">
            <ScrollButton dir="left" />
            <div className="w-[45%] border border-[#b5b5b5] bg-white" />
            <div className="flex-1" />
            <ScrollButton dir="right" />
          </div>
        </div>
      </div>
    </div>
  </section>
);

/* ---------- data sources panel ---------- */

const variables = ['allergenes', 'convive', 'couvercle', 'date_fab', 'dlc', 'estampille', 'ingredients', 'jour_conso', 'portions', 'recette'];
const texts = ['Text13', 'Text14', 'Text15', 'Text16', 'Text17', 'Text2'];

const SourcesPanel = () => (
  <section className="flex w-[237px] shrink-0 flex-col border border-[#a8a8a8] bg-[#e6e6e6] px-[2px] pb-[2px]">
    <div className="flex h-[21px] items-center pt-1 pr-[5px]">
      <Icon size={18}><Cylinder /></Icon>
      <h2 className="pl-[2px]">Sources de données</h2>
      <button aria-label="Options du volet" className="ml-auto">
        <svg width="8" height="5" viewBox="0 0 8 5"><path d="M0 0h8L4 5z" fill="#111" /></svg>
      </button>
      <button aria-label="Fermer le volet" className="ml-[10px]">
        <Icon size={9}><path d="M0 0l9 9M9 0L0 9" stroke="#111" strokeWidth="1.600" /></Icon>
      </button>
    </div>
    <div className="flex min-h-0 flex-1 flex-col justify-between border border-[#84888f] bg-white">
      <div className="flex">
        <div className="min-w-0 flex-1 pt-[2px]">
          <div className="flex h-5 items-center pl-[7px]">
            <svg width="7" height="7" viewBox="0 0 7 7"><path d="M7 0v7H0z" fill="#333" /></svg>
            <span className="pr-[5px] pl-2"><Icon size={16} box={18}><FormGlyph /></Icon></span>
            Formulaire(13)
          </div>
          <ul className="pl-[39px]">
            {variables.map((v) => (
              <li key={v} className="flex h-5 items-center">
                <span className={clsx('border pl-[19px] leading-[18px]', v === 'couvercle' ? 'rounded-xs border-[#6fb0dc] bg-[#b3dfff]' : 'border-transparent')}>{v}</span>
              </li>
            ))}
          </ul>
        </div>
        <div className="flex w-[17px] flex-col bg-[#dadada]">
          <ScrollButton dir="up" />
          <div className="h-7" />
          <div className="h-[104px] border border-[#b5b5b5] bg-white" />
          <div className="flex-1" />
          <ScrollButton dir="down" />
        </div>
      </div>
      <div className="flex">
        <ul className="flex-1 pb-px pl-[59px]">
          {texts.map((t) => (
            <li key={t} className="h-5 leading-5">{t}</li>
          ))}
        </ul>
        <div className="flex w-[17px] flex-col justify-end bg-[#dadada]">
          <ScrollButton dir="down" />
        </div>
      </div>
    </div>
  </section>
);

/* ---------- context menu ---------- */

const entries: { label: string; keys?: string; off?: boolean; marked?: boolean; icon?: React.ReactNode }[] = [
  { label: 'Couper', keys: 'Ctrl+', off: true, icon: <Scissors /> },
  { label: 'Copier', keys: 'Ctrl+', off: true, icon: <Pages /> },
  { label: 'Coller', keys: 'Ctrl+', icon: <Paste /> },
  { label: 'Collage spécial...' },
  {
    label: 'Mise en page...',
    marked: true,
    icon: (
      <>
        <path d="M2 1h17v21H2z" fill="#fff" stroke="#555" strokeWidth="2" />
        <circle cx="17" cy="17" r="7.500" fill="#f0f0f0" />
        <Gear x={17} y={17} r={6} />
      </>
    ),
  },
  {
    label: 'GRANDE SQUIX - COND - Copie.lab Propriétés',
    icon: (
      <>
        <path d="M2 1h11l6 6v15H2zM13 1v6h6" fill="#fff" stroke="#555" strokeWidth="2" />
        <circle cx="17" cy="17" r="7.500" fill="#f0f0f0" />
        <Gear x={17} y={17} r={6} />
      </>
    ),
  },
];

const ContextMenu = () => (
  <div className="absolute top-[423px] right-0 w-[304px]">
    <ul className="overflow-hidden border border-r-0 border-[#999] bg-[#f0f0f0] pt-px">
      {entries.map((e) => (
        <li key={e.label} className={clsx(e.marked && 'border-t border-[#d4d4d4] pt-1')}>
          <button disabled={e.off} className={clsx('flex h-6 w-full items-center whitespace-nowrap', e.off && 'text-[#777]')}>
            <span className="flex h-6 w-[26px] items-center justify-center border-r border-[#d4d4d4]">
              {e.icon && <span className={clsx(e.off && 'opacity-60')}><Icon size={16} box={24}>{e.icon}</Icon></span>}
            </span>
            <span className="pl-[7px]">{e.label}</span>
            {e.keys && <span className="ml-auto w-[23px] text-[#777]">{e.keys}</span>}
          </button>
        </li>
      ))}
    </ul>
    {/* marker over the page setup entry */}
    <div className="pointer-events-none absolute top-[100px] right-[83px] h-[26px] w-[224px] bg-[#ffff80] mix-blend-multiply" />
  </div>
);

/* ---------- palette and status bar ---------- */

const swatches = [
  '#000000', '#0000ff', '#00ffff', '#00ff00', '#ff0000', '#ff00ff', '#ffff00', '#ffffff', '#333333', '#696969',
  '#808080', '#969696', '#c0c0c0', '#cccccc', '#dddddd', '#80ffff', '#0080c0', '#0080ff', '#0000a0', '#000040',
  '#000080', '#004080', '#8080c0', '#8080ff', '#8000ff', '#400080', '#800080', '#ff80ff', '#ff80c0', '#ff8080',
  '#ff8040', '#ff8000', '#ff0080', '#400000', '#804000', '#800040', '#804040', '#800000', '#400040', '#400040',
  '#808000', '#808040', '#ffff80', '#80ff80', '#00ff40', '#00ff80', '#80ff00', '#008040', '#008000', '#004000',
  '#004040', '#408080', '#008080', '#ffffff', '#ffffff', '#ffffff',
];

const Palette = () => (
  <div className="flex h-[25px] items-center pr-px pl-[49px]">
    <button aria-label="Couleurs imprimante" className="flex size-[18px] items-center justify-center border border-[#777] bg-[#d9d9d9]">
      <Icon size={16} box={24}><Printer /></Icon>
    </button>
    <button aria-label="Aucune couleur" className="ml-[5px] flex size-[18px] items-center justify-center border border-[#777] bg-[#d9d9d9]">
      <Icon size={14}><path d="M2 2l10 10M12 2L2 12" stroke={RED} strokeWidth="3" /></Icon>
    </button>
    <button aria-label="Couleurs précédentes" className="flex h-[18px] w-4 items-center justify-center border border-[#777] bg-[#e0e0e0]">
      <svg width="5" height="8" viewBox="0 0 5 8"><path d="M5 0v8L0 4z" fill="#000" /></svg>
    </button>
    <div className="ml-[3px] flex h-4 flex-1 gap-[2px] bg-[#6b6b6b] p-px">
      {swatches.map((c, i) => (
        <button key={i} aria-label={c} className="flex-1" style={{ backgroundColor: c }} />
      ))}
    </div>
    <button aria-label="Couleurs suivantes" className="flex h-[18px] w-4 items-center justify-center border border-[#777] bg-[#e0e0e0]">
      <svg width="5" height="8" viewBox="0 0 5 8"><path d="M0 0v8l5-4z" fill="#000" /></svg>
    </button>
  </div>
);

const StatusBar = () => (
  <footer className="ml-[46px] flex h-[22px] items-center bg-[#f0f0f0] whitespace-nowrap">
    <div className="w-[183px] border-r border-[#777] pl-1 leading-[18px]">\\xa7-printer01\BEDEE-INFO</div>
    <div className="w-[135px] border-r border-[#777] pl-[6px] leading-[18px]">10.0.1.10</div>
    <div className="w-[135px] border-r border-[#777] pl-[5px] leading-[18px]">x; y: 80,87; 23,73</div>
    <div className="w-[135px] border-r border-[#777] pl-[6px] leading-[18px]">cx; cy:</div>
    <div className="h-[18px] flex-1 border-r border-[#777]" />
    <div className="w-[185px] border-r border-[#777] pl-[10px] leading-[18px]">365 jours restant</div>
    <div className="flex w-[22px] justify-end self-end p-px">
      <svg width="12" height="12" viewBox="0 0 12 12">
        <path d="M9 0h2v2H9zM6 3h2v2H6zM9 3h2v2H9zM3 6h2v2H3zM6 6h2v2H6zM9 6h2v2H9zM0 9h2v2H0zM3 9h2v2H3zM6 9h2v2H6zM9 9h2v2H9z" fill="#b8c0c8" />
      </svg>
    </div>
  </footer>
);

const App: React.FC = () => (
  <div className="relative flex h-screen min-h-[740px] flex-col overflow-hidden border-r border-b border-l border-[#38614c] bg-[#e6e6e6] font-['Open_Sans','Noto_Sans',sans-serif] text-[12px] leading-4 text-[#111]">
    <TitleBar />
    <Toolbars />
    <main className="flex min-h-0 flex-1 gap-[6px] pt-[2px]">
      <div className="flex min-w-0 flex-1 gap-px pl-px">
        <SideBar />
        <DocumentView />
      </div>
      <SourcesPanel />
    </main>
    <Palette />
    <StatusBar />
    <ContextMenu />
  </div>
);

export default App;
